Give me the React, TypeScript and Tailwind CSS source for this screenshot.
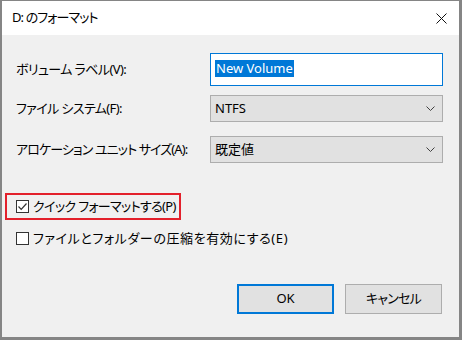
import React from "react";

const font = { fontFamily: "'Noto Sans', 'Noto Sans CJK JP', sans-serif" };

function Chevron() {
  return (
    <svg width="9" height="5" viewBox="0 0 9 5" className="shrink-0">
      <path d="M0.5 0.5 L4.5 4.5 L8.5 0.5" fill="none" stroke="#404040" strokeWidth="1" />
    </svg>
  );
}

function Select({ value }: { value: string }) {
  return (
    <div className="w-[233px] h-[27px] bg-[#e1e1e1] border border-[#adadad] flex items-center justify-between pl-[4px] pr-[7px] text-[13px] text-[#000]">
      <span>{value}</span>
      <Chevron />
    </div>
  );
}

function Row({ label, children, className, track }: { label: string; children: React.ReactNode; className?: string; track: string }) {
  return (
    <div className={"flex items-center justify-between " + (className ?? "")}>
      <span className={"text-[13px] text-black whitespace-nowrap " + track}>{label}</span>
      {children}
    </div>
  );
}

export default function App() {
  return (
    <div
      style={font}
      className="w-[462px] h-[340px] flex flex-col border-t border-l-2 border-r-[3px] border-b-[3px] border-[#858585] bg-[#f0f0f0] overflow-hidden [font-feature-settings:'palt']"
    >
      <div className="h-[34px] bg-white flex items-center justify-between pl-[10px] pr-[12px] shrink-0">
        <span className="text-[13px] text-black whitespace-nowrap tracking-[-0.9px]">D: のフォーマット</span>
        <svg width="11" height="11" viewBox="0 0 11 11">
          <path d="M0.5 0.5 L10.5 10.5 M10.5 0.5 L0.5 10.5" stroke="#111" strokeWidth="1" />
        </svg>
      </div>
      <div className="flex-1 flex flex-col pl-[14px] pr-[16px]">
        <Row label="ボリューム ラベル(V):" className="mt-[18px]" track="tracking-[-0.6px]">
          <div className="w-[233px] h-[33px] bg-white border border-[#0078d7] flex items-center pl-[4px] pb-[2px]">
            <span className="bg-[#0078d7] text-white text-[13px] leading-[17px] px-[1px]">New Volume</span>
          </div>
        </Row>
        <Row label="ファイル システム(F):" className="mt-[9px]" track="tracking-[-0.6px]">
          <Select value="NTFS" />
        </Row>
        <Row label="アロケーション ユニット サイズ(A):" className="mt-[14px]" track="tracking-[-0.9px]">
          <Select value="既定値" />
        </Row>
        <div className="mt-[30px] -ml-[11px] w-[176px] h-[27px] border-2 border-[#e3202b] flex items-center pl-[9px] gap-[4px]">
          <div className="w-[13px] h-[13px] border border-[#333] bg-white flex items-center justify-center shrink-0">
            <svg width="11" height="11" viewBox="0 0 11 11">
              <path d="M1.5 5.5 L4.2 8.3 L9.5 2.5" fill="none" stroke="#333" strokeWidth="1.2" />
            </svg>
          </div>
          <span className="text-[13px] text-black whitespace-nowrap tracking-[-0.65px]">クイック フォーマットする(P)</span>
        </div>
        <div className="mt-[8px] h-[21px] flex items-center gap-[4px]">
          <div className="w-[13px] h-[13px] border border-[#333] bg-white shrink-0" />
          <span className="text-[13px] text-black whitespace-nowrap tracking-[0.6px]">ファイルとフォルダーの圧縮を有効にする(E)</span>
        </div>
        <div className="mt-[35px] flex justify-end gap-[11px] pr-[1px]">
          <div className="w-[97px] h-[30px] bg-[#e1e1e1] border-2 border-[#0078d7] flex items-center justify-center text-[13px] text-black">
            OK
          </div>
          <div className="w-[97px] h-[30px] bg-[#e1e1e1] border border-[#adadad] flex items-center justify-center text-[13px] text-black tracking-[-0.8px]">
            キャンセル
          </div>
        </div>
      </div>
    </div>
  );
}
